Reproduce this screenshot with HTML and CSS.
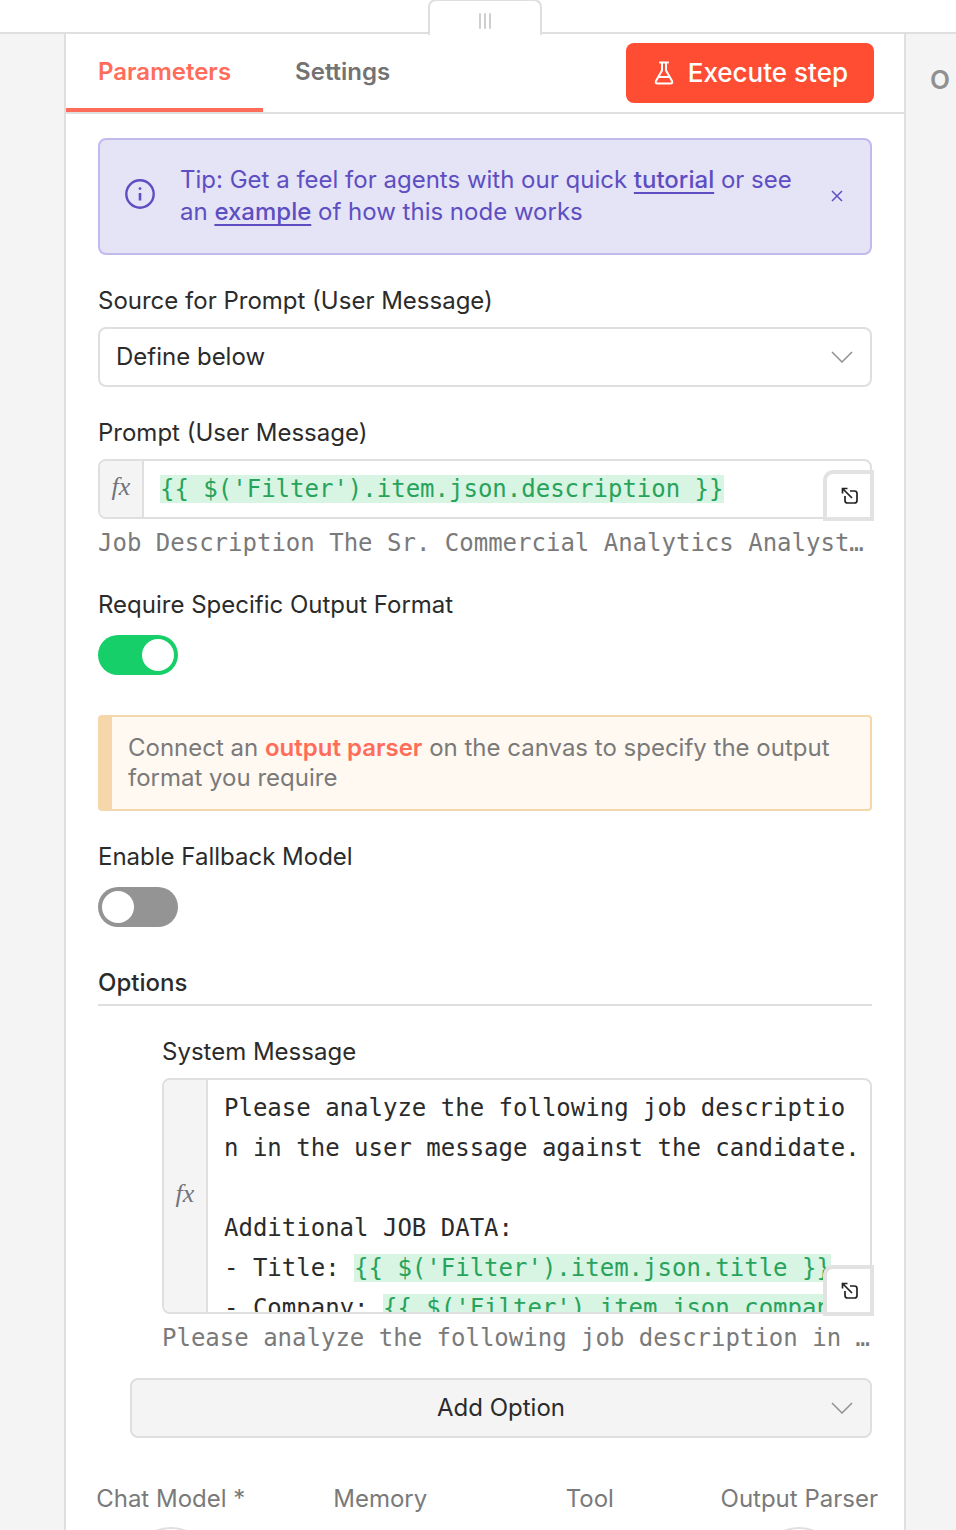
FILE: index.html
```html
<!DOCTYPE html>
<html lang="en">
<head>
<meta charset="utf-8">
<title>AI Agent parameters</title>
<link rel="stylesheet" href="styles.css">
</head>
<body>
<header class="topbar">
  <div class="drag-handle">
    <svg width="14" height="18" viewBox="0 0 14 18" aria-hidden="true"><path d="M2 2v14M7 2v14M12 2v14" stroke="#cfcfcf" stroke-width="2" stroke-linecap="round"/></svg>
  </div>
</header>
<div class="workspace">
  <aside class="side-input"></aside>
  <main class="panel">
    <div class="panel-header">
      <nav class="tabs">
        <a class="tab tab-active" href="#parameters">Parameters</a>
        <a class="tab" href="#settings">Settings</a>
      </nav>
      <button class="execute" type="button">
        <svg width="20" height="24" viewBox="0 0 20 24" fill="none" stroke="#fff" stroke-width="2" stroke-linecap="round" stroke-linejoin="round" aria-hidden="true"><path d="M6 1.500h8M8 2v7.500L2 20q-1 2.500 1.500 2.500h13q2.500 0 1.500-2.500L12 9.500V2M4.500 16h11"/></svg>
        <span>Execute step</span>
      </button>
    </div>
    <form class="params">
      <div class="tip">
        <svg class="tip-icon" width="32" height="32" viewBox="0 0 32 32" fill="none" stroke="#5d4ec2" aria-hidden="true"><circle cx="16" cy="16" r="13.700" stroke-width="2.400"/><path d="M16 15v7.500" stroke-width="2.600"/><circle cx="16" cy="10.600" r="1.400" fill="#5d4ec2" stroke="none"/></svg>
        <p class="tip-text">Tip: Get a feel for agents with our quick <a href="#tutorial">tutorial</a> or see an <a href="#example">example</a> of how this node works</p>
        <button class="tip-close" type="button" aria-label="Dismiss tip">
          <svg width="12" height="12" viewBox="0 0 12 12" aria-hidden="true"><path d="M1 1l10 10M11 1L1 11" stroke="#5d4ec2" stroke-width="1.500"/></svg>
        </button>
      </div>

      <div class="field">
        <label class="label" for="source">Source for Prompt (User Message)</label>
        <div class="select-wrap">
          <select class="select" id="source"><option>Define below</option></select>
          <svg class="chevron" width="22" height="12" viewBox="0 0 22 12" fill="none" aria-hidden="true"><path d="M1 1l10 10L21 1" stroke="#919191" stroke-width="1.500"/></svg>
        </div>
      </div>

      <div class="field">
        <label class="label" for="prompt">Prompt (User Message)</label>
        <div class="editor">
          <span class="fx">fx</span>
          <input class="expression" id="prompt" type="text" value="{{ $('Filter').item.json.description }}">
          <button class="expand" type="button" aria-label="Open expression editor">
            <svg width="18" height="18" viewBox="0 0 18 18" fill="none" stroke="#222" stroke-width="1.700" aria-hidden="true"><path d="M1.500 6.500v-5h5M1.500 1.500l9.500 9.500M9 4h4.500q2.500 0 2.500 2.500v7q0 2.500-2.500 2.500h-7Q4 16 4 13.500V9"/></svg>
          </button>
        </div>
        <p class="hint">Job Description The Sr. Commercial Analytics Analyst…</p>
      </div>

      <div class="field">
        <label class="label label-switch" for="format">Require Specific Output Format</label>
        <input class="switch" id="format" type="checkbox" checked>
      </div>

      <div class="notice">Connect an <a href="#parser">output parser</a> on the canvas to specify the output format you require</div>

      <div class="field">
        <label class="label label-switch" for="fallback">Enable Fallback Model</label>
        <input class="switch" id="fallback" type="checkbox">
      </div>

      <h2 class="section-title">Options</h2>

      <div class="field field-nested">
        <span class="label" id="system-label">System Message</span>
        <div class="editor editor-tall">
          <span class="fx">fx</span>
          <div class="code" role="textbox" aria-multiline="true" aria-labelledby="system-label" contenteditable="true" spellcheck="false"><div>Please analyze the following job descriptio</div><div>n in the user message against the candidate.</div><div><br></div><div>Additional JOB DATA:</div><div>- Title: <span class="mark">{{ $('Filter').item.json.title }}</span></div><div>- Company: <span class="mark">{{ $('Filter').item.json.company }}</span></div></div>
          <button class="expand" type="button" aria-label="Open expression editor">
            <svg width="18" height="18" viewBox="0 0 18 18" fill="none" stroke="#222" stroke-width="1.700" aria-hidden="true"><path d="M1.500 6.500v-5h5M1.500 1.500l9.500 9.500M9 4h4.500q2.500 0 2.500 2.500v7q0 2.500-2.500 2.500h-7Q4 16 4 13.500V9"/></svg>
          </button>
        </div>
        <p class="hint">Please analyze the following job description in …</p>
      </div>

      <button class="add-option" type="button">
        <span>Add Option</span>
        <svg class="chevron" width="22" height="12" viewBox="0 0 22 12" fill="none" aria-hidden="true"><path d="M1 1l10 10L21 1" stroke="#919191" stroke-width="1.500"/></svg>
      </button>
    </form>
    <div class="connections">
      <div class="connection"><span>Chat Model *</span><button class="plus" type="button" aria-label="Add chat model"></button></div>
      <div class="connection"><span>Memory</span></div>
      <div class="connection"><span>Tool</span></div>
      <div class="connection"><span>Output Parser</span><button class="plus" type="button" aria-label="Add output parser"></button></div>
    </div>
  </main>
  <aside class="side-output">O</aside>
</div>
</body>
</html>
```
FILE: styles.css
```css
* { box-sizing: border-box; }

body {
  margin: 0;
  height: 100vh;
  overflow: hidden;
  display: flex;
  flex-direction: column;
  background: #f4f4f4;
  color: #2b2b2b;
  font: 400 24px/32px Inter, "Liberation Sans", sans-serif;
}

p, h2 { margin: 0; }
button, input, select { font: inherit; color: inherit; }
button { cursor: pointer; }

.topbar {
  display: flex;
  justify-content: center;
  flex: none;
  height: 34px;
  padding-left: 14px;
  background: #fff;
  border-bottom: 2px solid #dfdfdf;
}
.drag-handle {
  z-index: 1;
  display: flex;
  justify-content: center;
  align-items: center;
  width: 114px;
  height: 36px;
  margin-top: -1px;
  padding-top: 6px;
  background: #fff;
  border: 2px solid #dfdfdf;
  border-bottom: 0;
  border-radius: 8px 8px 0 0;
}

.workspace { display: flex; flex: 1; min-height: 0; }
.side-input { flex: none; width: 64px; }
.side-output {
  flex: none;
  width: 50px;
  padding: 30px 0 0 24px;
  overflow: hidden;
  color: #909090;
  font-size: 26px;
  font-weight: 600;
}
.panel {
  flex: 1;
  min-width: 0;
  overflow: hidden;
  background: #fff;
  border: solid #dfdfdf;
  border-width: 0 2px;
}

.panel-header {
  display: flex;
  justify-content: space-between;
  height: 80px;
  padding-right: 30px;
  border-bottom: 2px solid #dfdfdf;
}
.tabs { display: flex; }
.tab {
  padding: 22px 32px 20px;
  border-bottom: 4px solid transparent;
  color: #737373;
  font-weight: 600;
  text-decoration: none;
}
.tab-active { color: #ff6d5a; border-color: #ff6d5a; }
.execute {
  display: flex;
  align-items: center;
  justify-content: center;
  gap: 14px;
  height: 60px;
  margin-top: 9px;
  padding: 0 26px 0 28px;
  border: 0;
  border-radius: 8px;
  background: #ff4d33;
  color: #fff;
  font-size: 26px;
  font-weight: 500;
}

.params { padding: 24px 32px 0; }
.tip {
  display: flex;
  align-items: center;
  min-height: 117px;
  padding: 0 24px;
  border: 2px solid #c2b9ec;
  border-radius: 8px;
  background: #e5e3f6;
  color: #5d4ec2;
}
.tip-icon { flex: none; margin-bottom: 6px; }
.tip-text { flex: 1; padding: 0 24px 2px; }
.tip-text a {
  color: inherit;
  font-weight: 500;
  text-decoration-thickness: 2px;
  text-underline-offset: 4px;
  text-decoration-skip-ink: none;
}
.tip-close {
  display: flex;
  margin-bottom: 2px;
  padding: 3px;
  border: 0;
  background: none;
}

.field { margin-top: 30px; }
.label { display: block; margin-bottom: 10px; }
.label-switch { margin-bottom: 14px; }

.select-wrap { position: relative; }
.select {
  display: block;
  width: 100%;
  height: 60px;
  padding: 0 48px 0 16px;
  border: 2px solid #dfdfdf;
  border-radius: 8px;
  background: #fff;
  appearance: none;
}
.chevron {
  position: absolute;
  right: 19px;
  top: 50%;
  margin-top: -6px;
  pointer-events: none;
}

.editor {
  position: relative;
  display: flex;
  align-items: stretch;
  height: 60px;
  border: 2px solid #dfdfdf;
  border-radius: 8px;
  background: #fff;
}
.editor-tall { height: 236px; }
.fx {
  display: flex;
  flex: none;
  align-items: center;
  justify-content: center;
  width: 44px;
  padding-bottom: 4px;
  border-right: 2px solid #dfdfdf;
  border-radius: 6px 0 0 6px;
  background: #f4f4f4;
  color: #70747f;
  font: italic 26px/30px "Liberation Serif", serif;
}
.expression, .code, .hint { font-family: "DejaVu Sans Mono", monospace; }
.expression {
  align-self: flex-start;
  width: 39ch;
  height: 28px;
  margin: 14px 16px;
  padding: 0;
  border: 0;
  background: #d8f4e3;
  color: #27a35b;
}
.code {
  flex: 1;
  min-width: 0;
  overflow: hidden;
  padding: 8px 0 0 16px;
  line-height: 40px;
  white-space: pre;
}
.mark { background: #d8f4e3; color: #27a35b; }
.expand {
  position: absolute;
  right: -4px;
  bottom: -4px;
  display: flex;
  align-items: center;
  justify-content: center;
  width: 51px;
  height: 51px;
  padding: 0 0 0 3px;
  border: 4px solid #e2e2e2;
  border-top-left-radius: 10px;
  background: #fff;
}
.hint {
  margin-top: 8px;
  overflow: hidden;
  color: #7a7a7a;
  text-overflow: ellipsis;
  white-space: nowrap;
}

.switch {
  display: block;
  width: 80px;
  height: 40px;
  margin: 0;
  padding: 4px;
  border-radius: 20px;
  background: #949494;
  appearance: none;
}
.switch::before {
  content: "";
  display: block;
  width: 32px;
  height: 32px;
  border-radius: 50%;
  background: #fff;
}
.switch:checked { background: #17cf69; }
.switch:checked::before { margin-left: auto; }

.notice {
  margin-top: 40px;
  padding: 16px;
  border: 2px solid #f5d7ab;
  border-left-width: 14px;
  border-radius: 4px;
  background: #fff9f1;
  color: #7a7a7a;
  line-height: 30px;
}
.notice a { color: #ff6d5a; font-weight: 600; text-decoration: none; }

.section-title {
  margin-top: 40px;
  padding-bottom: 5px;
  border-bottom: 2px solid #dfdfdf;
  font-size: 24px;
  font-weight: 500;
}
.field-nested { margin-left: 64px; }
.add-option {
  position: relative;
  display: block;
  width: calc(100% - 32px);
  height: 60px;
  margin: 24px 0 0 32px;
  border: 2px solid #dfdfdf;
  border-radius: 8px;
  background: #f4f4f4;
}
.add-option .chevron { right: 17px; }

.connections {
  display: grid;
  grid-template-columns: repeat(4, 1fr);
  margin-top: 45px;
  color: #7a7a7a;
}
.connection {
  display: flex;
  flex-direction: column;
  align-items: center;
  gap: 12px;
  white-space: nowrap;
}
.plus {
  width: 80px;
  height: 80px;
  border: 2px solid #dfdfdf;
  border-radius: 50%;
  background: #fff;
}
```
